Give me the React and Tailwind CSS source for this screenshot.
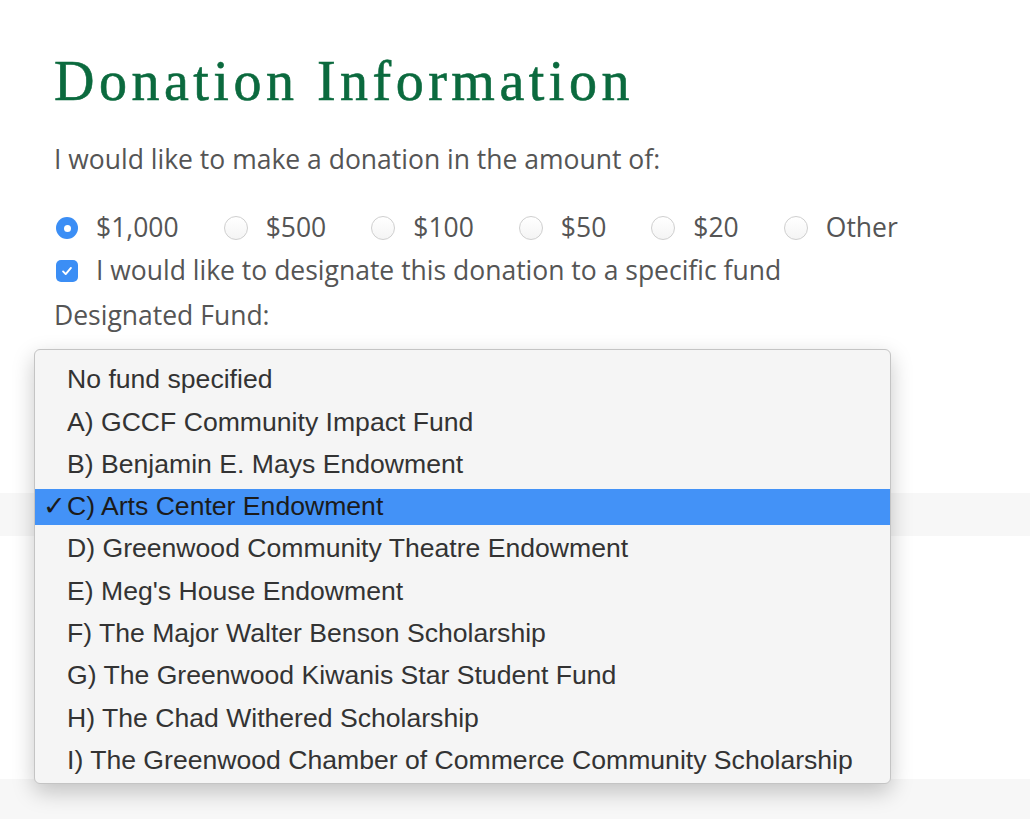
import React, { useState } from 'react';

const amounts = ['$1,000', '$500', '$100', '$50', '$20', 'Other'];

const funds = [
  'No fund specified',
  'A) GCCF Community Impact Fund',
  'B) Benjamin E. Mays Endowment',
  'C) Arts Center Endowment',
  'D) Greenwood Community Theatre Endowment',
  "E) Meg's House Endowment",
  'F) The Major Walter Benson Scholarship',
  'G) The Greenwood Kiwanis Star Student Fund',
  'H) The Chad Withered Scholarship',
  'I) The Greenwood Chamber of Commerce Community Scholarship',
];

const Radio = ({ checked }) =>
  checked ? (
    <span className="flex h-[22px] w-[22px] shrink-0 items-center justify-center rounded-full bg-[#3b8ef5]">
      <span className="h-[7px] w-[7px] rounded-full bg-white" />
    </span>
  ) : (
    <span className="h-[24px] w-[24px] shrink-0 rounded-full border border-[#cfcfcf] bg-gradient-to-b from-white to-[#f4f4f4]" />
  );

export default function App() {
  const [amount, setAmount] = useState(0);
  const [fund, setFund] = useState(3);

  return (
    <div className="relative h-[820px] w-[1030px] overflow-hidden bg-white font-['Open_Sans',sans-serif] text-[#555]">
      <div className="px-[54px] pt-[49px]">
        <h1 className="font-['Liberation_Serif',serif] text-[56px] leading-[64px] tracking-[4.5px] text-[#0b6a3e] [-webkit-text-stroke:0.6px_#0b6a3e]">
          Donation Information
        </h1>
        <p className="mt-[29px] text-[26.5px] leading-[34px]">I would like to make a donation in the amount of:</p>

        {/* amounts */}
        <div className="mt-[35px] flex h-[34px] items-center pl-[2px]">
          {amounts.map((a, i) => (
            <label key={a} onClick={() => setAmount(i)} className="flex items-center text-[26.5px]">
              <Radio checked={amount === i} />
              <span className="ml-[18px] mr-[45px]">{a}</span>
            </label>
          ))}
        </div>

        <div className="mt-[9px] flex h-[34px] items-center pl-[2px] text-[26.5px]">
          <span className="flex h-[22px] w-[22px] items-center justify-center rounded-[5px] bg-[#3b8ef5]">
            <svg viewBox="0 0 16 16" className="h-[14px] w-[14px]" fill="none" stroke="white" strokeWidth="2.2" strokeLinecap="round" strokeLinejoin="round">
              <path d="M3.5 8.5l3 3 6-7" />
            </svg>
          </span>
          <span className="ml-[18px]">I would like to designate this donation to a specific fund</span>
        </div>

        <p className="mt-[10px] text-[26.5px] leading-[34px]">Designated Fund:</p>
      </div>

      {/* background bands of the page below */}
      <div className="mt-[161px] h-[43px] bg-[#f7f7f7]" />
      <div className="mt-[243px] h-[40px] bg-[#f7f7f7]" />

      {/* open select menu */}
      <div className="absolute left-[34px] top-[349px] w-[857px] rounded-[6px] border border-[#c4c4c4] bg-[#f5f5f5] pb-[1px] pt-[9px] shadow-[0_8px_22px_rgba(0,0,0,0.22)]">
        {funds.map((f, i) => (
          <div key={f} onClick={() => setFund(i)} className="flex h-[42.3px] items-center">
            <div
              className={`relative flex h-[36px] w-full items-center pl-[32px] font-['Liberation_Sans',Arial,sans-serif] text-[26.6px] ${
                fund === i ? 'bg-[#4392f7] text-[#1b1b1b]' : 'text-[#333]'
              }`}
            >
              {fund === i && <span className="absolute left-[8px]">✓</span>}
              {f}
            </div>
          </div>
        ))}
      </div>
    </div>
  );
}
